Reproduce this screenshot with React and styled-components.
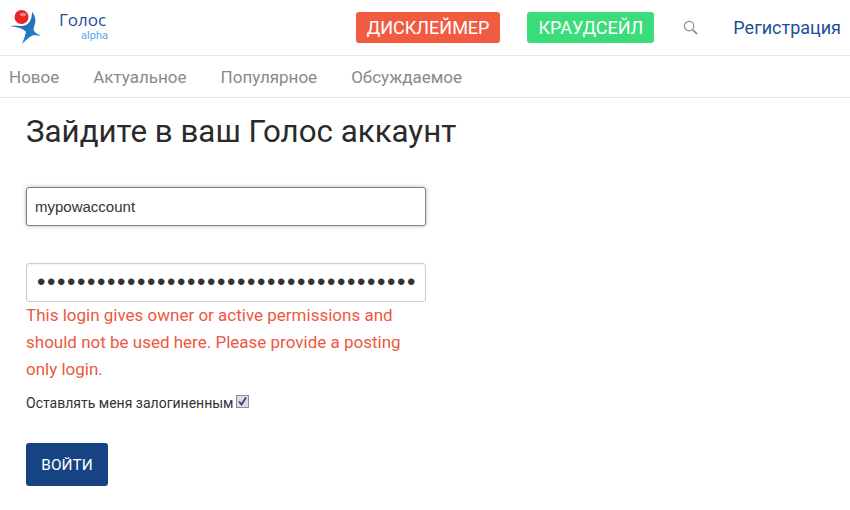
import React from 'react';
import styled, { createGlobalStyle } from 'styled-components';

const Global = createGlobalStyle`
    html, body {
        margin: 0;
        padding: 0;
        background: #fff;
        font-family: Roboto, "Liberation Sans", sans-serif;
        color: #333;
    }
`

const Header = styled.header`
    display: flex;
    align-items: center;
    height: 55px;
    border-bottom: 1px solid #e7e7e7;
    padding: 0 9px 0 10px;
`

const Brand = styled.div`
    display: flex;
    align-items: flex-start;
    flex: 1;
`

const BrandText = styled.div`
    display: flex;
    flex-direction: column;
    margin-left: 15px;
    padding-top: 6px;
    width: 49px;
`

const BrandName = styled.span`
    font-family: "Open Sans", sans-serif;
    font-size: 17px;
    line-height: 21px;
    color: #1a5099;
`

const BrandTag = styled.span`
    font-size: 11px;
    line-height: 11px;
    color: #5aa4ee;
    text-align: right;
`

const Pill = styled.a`
    display: block;
    height: 31px;
    line-height: 31px;
    padding: 0 11px;
    border-radius: 3px;
    margin-right: ${props => props.gap}px;
    background: ${props => props.color};
    color: #fff;
    font-size: 18px;
`

const SearchIcon = styled.svg`
    width: 15px;
    height: 15px;
    margin-right: 35px;
`

const SignUp = styled.a`
    color: #1a5099;
    font-size: 18px;
`

const SubNav = styled.nav`
    display: flex;
    align-items: center;
    gap: 34px;
    height: 41px;
    padding-left: 9px;
    border-bottom: 1px solid #e7e7e7;
`

const SubLink = styled.a`
    color: #8a8a8a;
    font-size: 17px;
`

const Main = styled.main`
    width: 400px;
    margin-left: 26px;
`

const Title = styled.h1`
    margin: 12px 0 33px;
    width: 500px;
    font-weight: 400;
    font-size: 31.3px;
    line-height: 44px;
    color: #2a2a2a;
`

const Field = styled.input`
    display: block;
    box-sizing: border-box;
    width: 400px;
    height: 39px;
    padding: 0 8px;
    margin: 0;
    border: 1px solid ${props => props.$focused ? '#808080' : '#ccc'};
    border-radius: 3px;
    outline: none;
    background: #fff;
    color: #333;
    font-family: "Liberation Sans", sans-serif;
    font-size: 15px;
    box-shadow: ${props => props.$focused ? '0 0 4px rgba(0,0,0,0.3)' : 'inset 0 1px 2px rgba(0,0,0,0.06)'};
`

const PasswordField = styled(Field)`
    margin-top: 37px;
    padding: 0 8px 1px 10px;
    font-size: 24px;
    letter-spacing: 1.6px;
`

const ErrorText = styled.div`
    width: 385px;
    color: #ec5840;
    font-size: 17px;
    line-height: 27px;
`

const Remember = styled.label`
    display: flex;
    align-items: center;
    margin-top: 12px;
    height: 16px;
    font-size: 14px;
    color: #333;
    white-space: nowrap;
`

const CheckBox = styled.span`
    display: block;
    box-sizing: border-box;
    width: 13px;
    height: 13px;
    margin: -4px 0 0 3px;
    border: 1px solid #8e8e8e;
    background: #dcdce4;
`

const Submit = styled.button`
    display: block;
    margin-top: 32px;
    width: 82px;
    height: 43px;
    border: 0;
    border-radius: 3px;
    background: #164483;
    color: #fff;
    font-family: Roboto, sans-serif;
    font-size: 15.4px;
`

function Logo() {
    return (
        <svg width="34" height="42" viewBox="10 7 34 42" style={{ display: 'block', marginTop: 7 }}>
            <defs>
                <linearGradient id="bird" x1="0" y1="0" x2="1" y2="1">
                    <stop offset="0" stopColor="#1c5fb0" />
                    <stop offset="1" stopColor="#2c84cf" />
                </linearGradient>
            </defs>
            <path d="M32 9c3 3 4 8 3 12-1 3-2 5-1 7 1 2 4 3 7 5-3 0-5-1-7-1-4 1-8 5-12 9 1-3 3-7 4-12-2-3-8-5-16-6 6-1 12 1 16-1 4-2 6-7 6-13z" fill="url(#bird)" />
            <circle cx="21.5" cy="14" r="7" fill="#e8262a" />
            <ellipse cx="23" cy="11.5" rx="3" ry="1.8" fill="#f58a8a" />
        </svg>
    )
}

export default function App() {
    return (
        <>
            <Global />
            <Header>
                <Brand>
                    <Logo />
                    <BrandText>
                        <BrandName>Голос</BrandName>
                        <BrandTag>alpha</BrandTag>
                    </BrandText>
                </Brand>
                <Pill color="#f15b42" gap={27}>ДИСКЛЕЙМЕР</Pill>
                <Pill color="#3bdc7a" gap={29}>КРАУДСЕЙЛ</Pill>
                <SearchIcon viewBox="0 0 16 16" fill="none" stroke="#8f8f8f">
                    <circle cx="6.5" cy="6.5" r="5" strokeWidth="1.3" />
                    <path d="M10.5 10.5L15 15" strokeWidth="2" />
                </SearchIcon>
                <SignUp>Регистрация</SignUp>
            </Header>
            <SubNav>
                <SubLink>Новое</SubLink>
                <SubLink>Актуальное</SubLink>
                <SubLink>Популярное</SubLink>
                <SubLink>Обсуждаемое</SubLink>
            </SubNav>
            <Main>
                <Title>Зайдите в ваш Голос аккаунт</Title>
                <Field $focused type="text" defaultValue="mypowaccount" />
                <PasswordField type="password" defaultValue={'x'.repeat(38)} />
                <ErrorText>This login gives owner or active permissions and should not be used here. Please provide a posting only login.</ErrorText>
                <Remember>
                    Оставлять меня залогиненным
                    <CheckBox>
                        <svg width="11" height="11" viewBox="0 0 11 11" style={{ display: 'block' }}>
                            <path d="M2 5.5L4.5 8.5L9 1.5" fill="none" stroke="#2c3f94" strokeWidth="1.8" />
                        </svg>
                    </CheckBox>
                </Remember>
                <Submit>ВОЙТИ</Submit>
            </Main>
        </>
    )
}
